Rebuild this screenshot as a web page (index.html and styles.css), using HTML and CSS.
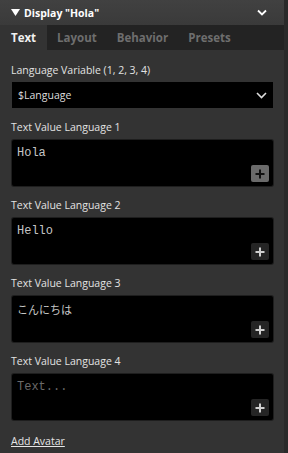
FILE: index.html
```html
<!DOCTYPE html>
<html lang="en">
<head>
  <meta charset="UTF-8">
  <meta name="viewport" content="width=device-width, initial-scale=1.0">
  <title>Display "Hola"</title>
  <link rel="stylesheet" href="styles.css">
</head>
<body>
  <div class="panel">
    <div class="header">
      <svg class="caret" width="9" height="7" viewBox="0 0 9 7"><path d="M0 0H9L4.5 7Z" fill="#fff"/></svg>
      <span class="title">Display "Hola"</span>
      <svg class="collapse" width="10" height="7" viewBox="0 0 10 7"><path d="M1 1.5L5 5.5L9 1.5" stroke="#fff" stroke-width="1.8" fill="none"/></svg>
    </div>

    <div class="tabs">
      <div class="tab active">Text</div>
      <div class="tab">Layout</div>
      <div class="tab">Behavior</div>
      <div class="tab">Presets</div>
    </div>

    <div class="content">
      <div class="field first">
        <div class="label">Language Variable (1, 2, 3, 4)</div>
        <div class="select">
          <span>$Language</span>
          <svg width="11" height="7" viewBox="0 0 11 7"><path d="M1 1L5.5 5.5L10 1" stroke="#ddd" stroke-width="1.6" fill="none"/></svg>
        </div>
      </div>

      <div class="field">
        <div class="label">Text Value Language 1</div>
        <div class="textbox">
          <div class="value">Hola</div>
          <button class="add light"><svg width="10" height="10" viewBox="0 0 10 10"><path d="M5 0.5V9.5M0.5 5H9.5" stroke="currentColor" stroke-width="2"/></svg></button>
        </div>
      </div>

      <div class="field">
        <div class="label">Text Value Language 2</div>
        <div class="textbox">
          <div class="value">Hello</div>
          <button class="add"><svg width="10" height="10" viewBox="0 0 10 10"><path d="M5 0.5V9.5M0.5 5H9.5" stroke="currentColor" stroke-width="2"/></svg></button>
        </div>
      </div>

      <div class="field">
        <div class="label">Text Value Language 3</div>
        <div class="textbox">
          <div class="value jp">こんにちは</div>
          <button class="add"><svg width="10" height="10" viewBox="0 0 10 10"><path d="M5 0.5V9.5M0.5 5H9.5" stroke="currentColor" stroke-width="2"/></svg></button>
        </div>
      </div>

      <div class="field last">
        <div class="label">Text Value Language 4</div>
        <div class="textbox">
          <div class="value placeholder">Text...</div>
          <button class="add"><svg width="10" height="10" viewBox="0 0 10 10"><path d="M5 0.5V9.5M0.5 5H9.5" stroke="currentColor" stroke-width="2"/></svg></button>
        </div>
      </div>

      <a class="add-avatar" href="#">Add Avatar</a>
    </div>
  </div>
</body>
</html>
```

FILE: styles.css
```css
body {
  margin: 0;
  background-color: #2a2a2a;
  font-family: "Open Sans", "Noto Sans", "Noto Sans CJK JP", sans-serif;
  color: #e2e2e2;
}
.panel {
  width: 284px;
  height: 453px;
  background-color: #333;
  overflow: hidden;
}
.header {
  height: 25px;
  display: flex;
  align-items: center;
  padding-left: 11px;
  background: linear-gradient(#414141, #3a3a3a);
}
.caret {
  margin-right: 4px;
}
.title {
  font-size: 10.5px;
  font-weight: bold;
  color: #fff;
  flex: 1;
}
.collapse {
  margin-right: 17px;
}
.tabs {
  height: 25px;
  display: flex;
  background-color: #232323;
}
.tab {
  font-size: 11.5px;
  font-weight: bold;
  color: #6e6e6e;
  line-height: 25px;
  padding: 0 10px;
}
.tab.active {
  background-color: #333;
  color: #f0f0f0;
  padding: 0 11px;
}
.content {
  padding: 12px 11px 0 12px;
}
.field {
  margin-bottom: 11px;
}
.field.last {
  margin-bottom: 8px;
}
.label {
  font-size: 10.5px;
  line-height: 16px;
  margin-bottom: 5px;
  margin-left: -1px;
}
.field.first .label {
  margin-bottom: 4px;
}
.select {
  height: 26px;
  background-color: #000;
  display: flex;
  align-items: center;
  justify-content: space-between;
  padding: 0 6px 0 6px;
  font-size: 10.5px;
  color: #ddd;
}
.textbox {
  position: relative;
  height: 46px;
  background-color: #000;
  border-radius: 2px;
  box-shadow: 0 0 0 1px #1e1e1e;
}
.value {
  font-family: "Liberation Mono", monospace;
  font-size: 12px;
  color: #c6c6c6;
  padding: 6px 5px;
}
.value.jp {
  font-family: "Noto Sans CJK JP", sans-serif;
  font-size: 11px;
  padding-top: 5px;
}
.value.placeholder {
  color: #6a6a6a;
}
.add {
  position: absolute;
  right: 4px;
  bottom: 4px;
  width: 18px;
  height: 17px;
  border: none;
  border-radius: 2px;
  padding: 0;
  display: flex;
  align-items: center;
  justify-content: center;
  background-color: #252525;
  color: #d0d0d0;
}
.add.light {
  background-color: #6b6b6b;
  color: #111;
}
.add-avatar {
  display: inline-block;
  font-size: 10.5px;
  line-height: 16px;
  color: #e6e6e6;
  margin-left: -1px;
}
```
